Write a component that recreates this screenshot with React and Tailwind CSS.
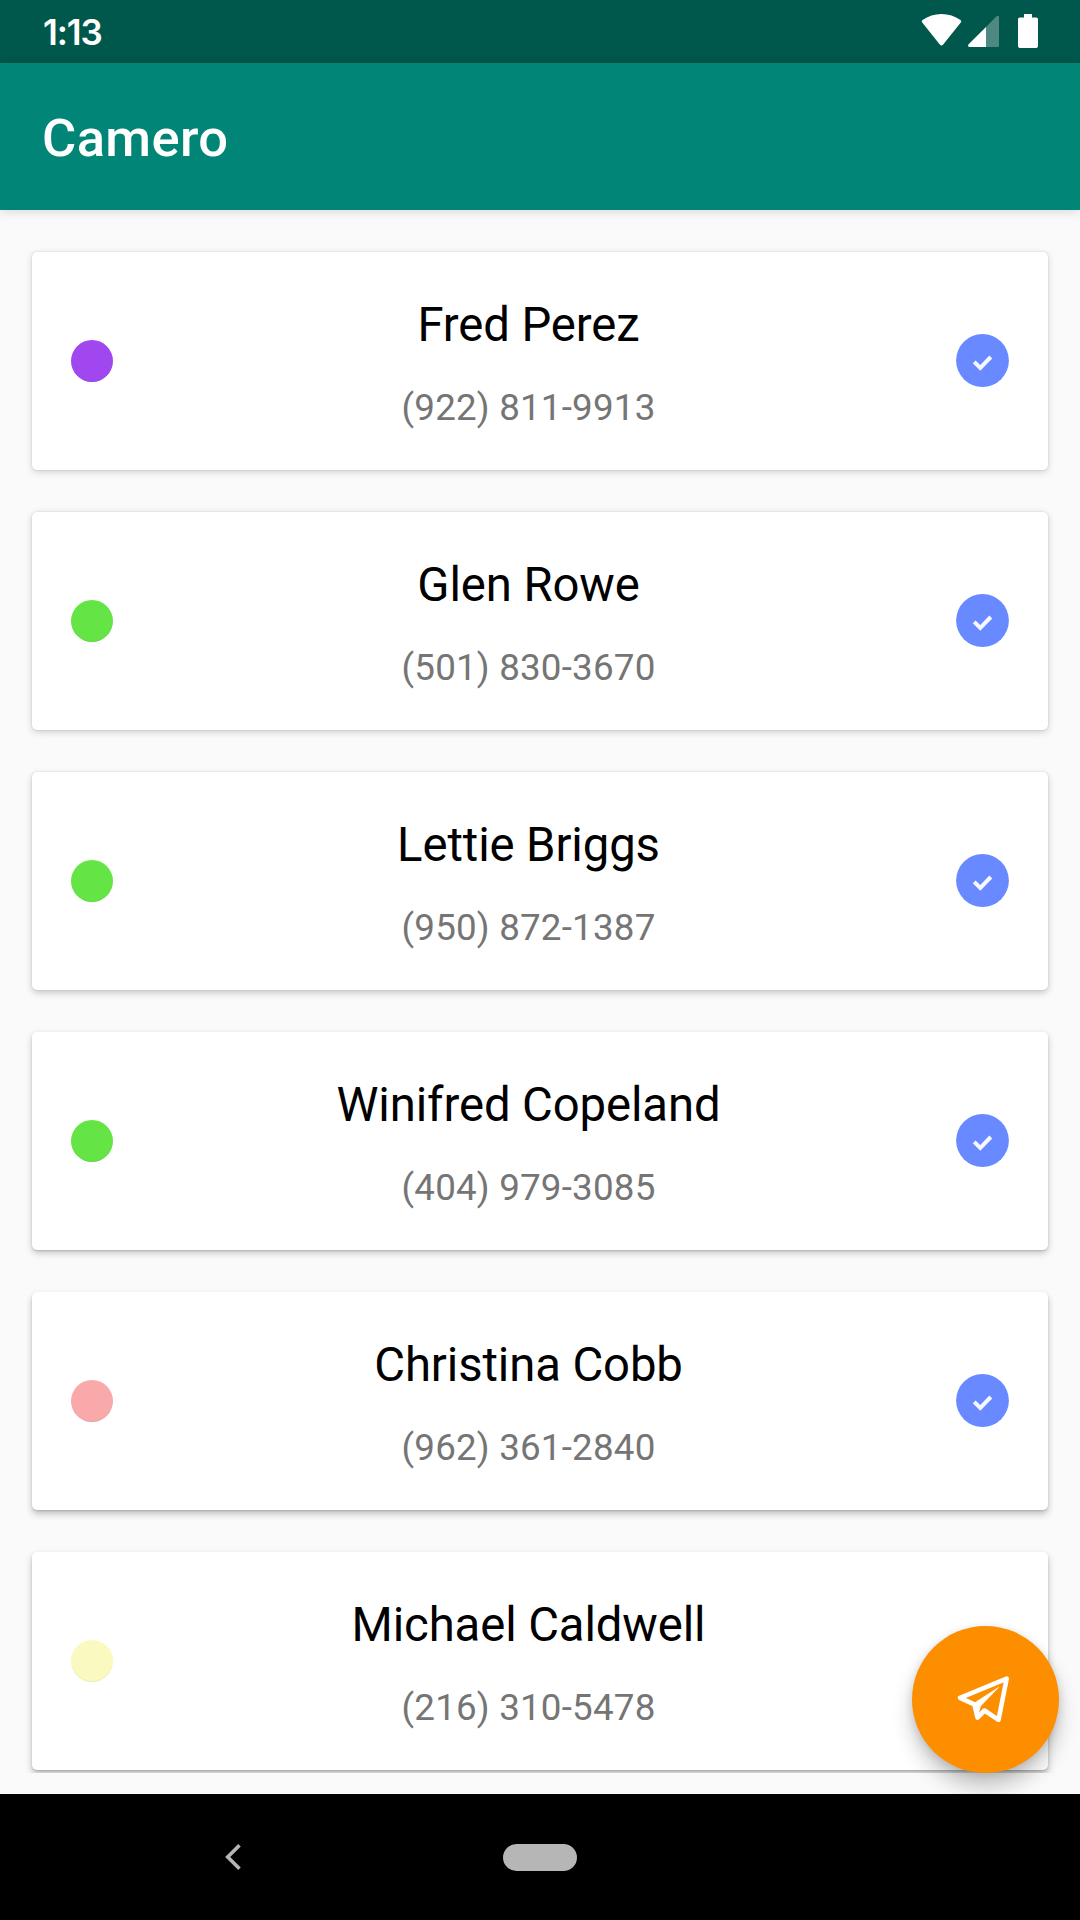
const contacts = [
  { name: "Fred Perez", phone: "(922) 811-9913", dot: "bg-[#a047f0]", checked: true, shadow: "shadow-[0_2px_7px_rgba(0,0,0,0.17),0_0_2px_rgba(0,0,0,0.14)]" },
  { name: "Glen Rowe", phone: "(501) 830-3670", dot: "bg-[#64e545]", checked: true, shadow: "shadow-[0_2px_7px_rgba(0,0,0,0.19),0_0_2px_rgba(0,0,0,0.14)]" },
  { name: "Lettie Briggs", phone: "(950) 872-1387", dot: "bg-[#64e545]", checked: true, shadow: "shadow-[0_3px_7px_rgba(0,0,0,0.20),0_0_2px_rgba(0,0,0,0.14)]" },
  { name: "Winifred Copeland", phone: "(404) 979-3085", dot: "bg-[#64e545]", checked: true, shadow: "shadow-[0_3px_7px_rgba(0,0,0,0.22),0_1px_2px_rgba(0,0,0,0.14)]" },
  { name: "Christina Cobb", phone: "(962) 361-2840", dot: "bg-[#faa9ab]", checked: true, shadow: "shadow-[0_4px_7px_rgba(0,0,0,0.24),0_1px_2px_rgba(0,0,0,0.14)]" },
  { name: "Michael Caldwell", phone: "(216) 310-5478", dot: "bg-[#fafac0]", checked: false, shadow: "shadow-[0_4px_7px_rgba(0,0,0,0.25),0_1px_2px_rgba(0,0,0,0.14)]" },
];

function StatusBar() {
  return (
    <div className="flex h-[63px] shrink-0 items-start justify-between bg-[#00574b] pl-[43px] pr-[42px] text-white">
      <span className="mt-[11px] font-['Inter',sans-serif] text-[35px] font-semibold leading-[42px] tracking-[-1.1px]">1:13</span>
      <div className="flex pt-[14px]">
        <svg className="h-[33px] w-[41px]" viewBox="0 0 41 33" fill="currentColor">
          <path d="M1.2 8.6Q0 7.2 1.5 6.1Q10 0 20.5 0Q31 0 39.5 6.1Q41 7.2 39.8 8.6L22.2 30.6Q20.5 32.5 18.8 30.6Z" />
        </svg>
        <svg className="ml-[6px] h-[33px] w-[31px]" viewBox="0 0 31 33" fill="currentColor">
          <path opacity="0.3" d="M18 13V33H29.5Q31 33 31 31.5V3Q30.5 1 28.6 2.3Z" />
          <path d="M18 13V33H1.3Q-.8 32.5.6 30.3Z" />
        </svg>
        <svg className="ml-[19px] h-[34px] w-5" viewBox="0 0 20 34" fill="currentColor">
          <path d="M6 0H14V3.4H18.2Q20 3.4 20 5.2V32Q20 34 18.2 34H1.8Q0 34 0 32V5.2Q0 3.4 1.8 3.4H6Z" />
        </svg>
      </div>
    </div>
  );
}

function CheckBadge() {
  return (
    <svg className="size-[53px]" viewBox="0 0 53 53" fill="none">
      <circle cx="26.5" cy="26.5" r="26.4" fill="#6889ff" />
      <path d="M18.2 27.9L24.3 34L34.8 23" stroke="#fff" strokeOpacity="0.94" strokeWidth="4" />
    </svg>
  );
}

function ContactCard({ name, phone, dot, checked, shadow }) {
  return (
    <li className={`flex h-[218px] shrink-0 items-center rounded-[5px] bg-white px-[39px] ${shadow}`}>
      <span className={`size-[42px] rounded-full ${dot} shadow-[inset_0_-1px_1px_rgba(0,0,0,0.06)]`} />
      <div className="mr-3 flex flex-1 flex-col items-center gap-[33px] pt-[5px]">
        <p className="text-[47.25px] leading-[55px] tracking-[-0.1px] text-black">{name}</p>
        <p className="text-[36.75px] leading-[43px] tracking-[0.2px] text-[#757575]">{phone}</p>
      </div>
      <div className="mb-px size-[53px]">{checked && <CheckBadge />}</div>
    </li>
  );
}

function SendButton() {
  return (
    <button className="absolute bottom-[21px] right-[21px] flex size-[147px] items-center justify-center rounded-full bg-[#fd8e00] shadow-[0_14px_20px_rgba(0,0,0,0.22),0_2px_8px_rgba(0,0,0,0.12)]">
      <svg className="size-[63px] text-white" viewBox="0 0 63 63" fill="none" stroke="currentColor" strokeWidth="4.6" strokeLinejoin="round" strokeLinecap="round">
        <path d="M6 29.8L52.7 10.6L44.5 51.8L30.5 42.5L23.5 49.5L20.3 36.3Z" />
        <path d="M20.5 35L44.5 19.5L26.5 38L23.5 48.5Z" fill="currentColor" strokeWidth="0.8" />
      </svg>
    </button>
  );
}

export default function App() {
  return (
    <div className="flex h-[1920px] w-[1080px] flex-col overflow-hidden bg-[#fafafa] font-['Roboto',sans-serif]">
      <StatusBar />
      <header className="relative z-10 flex h-[147px] shrink-0 items-center bg-[#008577] pl-[42px] shadow-[0_2px_10px_rgba(0,0,0,0.13)]">
        <h1 className="mt-[3px] text-[52.5px] font-medium leading-[62px] tracking-[0.4px] text-white">Camero</h1>
      </header>
      <main className="relative h-[1584px] shrink-0">
        <ul className="flex h-[1563px] flex-col gap-[42px] overflow-hidden px-8 pt-[42px]">
          {contacts.map((contact) => (
            <ContactCard key={contact.name} {...contact} />
          ))}
        </ul>
        <SendButton />
      </main>
      <nav className="grid h-[126px] shrink-0 grid-cols-[466px_148px_466px] items-center justify-items-center bg-black">
        <svg className="h-[26px] w-4" viewBox="0 0 16 26" fill="none" stroke="#b6b6b6" strokeWidth="3.6">
          <path d="M14.5 1.3L2.7 13L14.5 24.7" />
        </svg>
        <span className="h-[27px] w-[74px] rounded-full bg-[#b6b6b6]" />
      </nav>
    </div>
  );
}
